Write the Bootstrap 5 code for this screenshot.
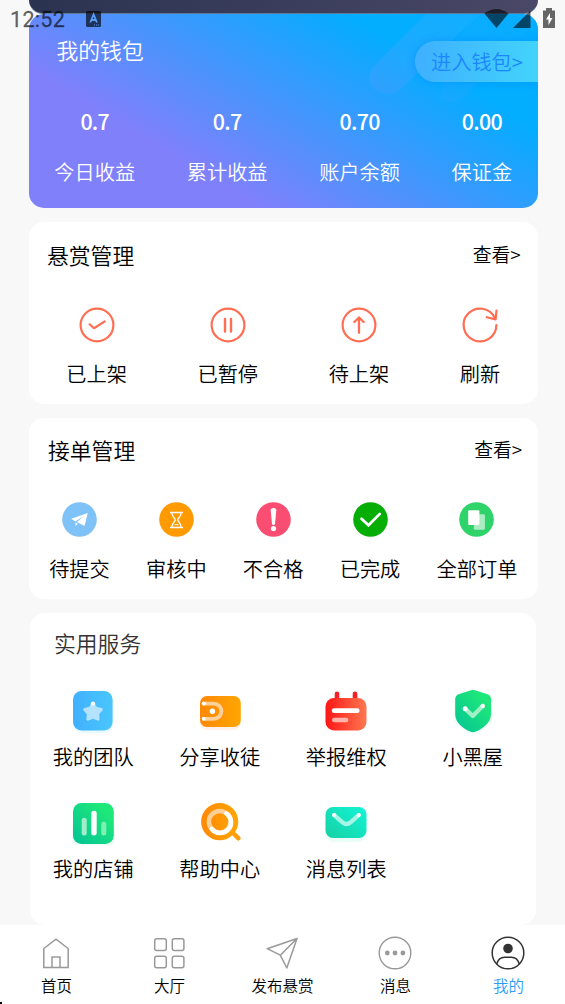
<!DOCTYPE html>
<html lang="zh-CN">
<head>
<meta charset="utf-8">
<meta name="viewport" content="width=device-width, initial-scale=1">
<title>我的</title>
<link href="https://cdn.jsdelivr.net/npm/bootstrap@5.3.0/dist/css/bootstrap.min.css" rel="stylesheet">
<style>
body{background:#f8f8f8;color:#000;font-family:"Noto Sans CJK SC",sans-serif;font-weight:350;font-size:20.2px;line-height:30px;height:1004px;overflow:hidden}
svg{display:block;overflow:visible}
.screen{width:565px;height:1004px}
.content{padding:0 27px 0 28.5px}
.banner{height:14px;background:linear-gradient(90deg,#2a3350,#4a4866);border-radius:0 0 14px 14px;border-bottom:1px solid #5d7a9c}
.wallet{height:194px;border-radius:15px;color:#fff;background:linear-gradient(31deg,#8080fb 28%,#03adff 77%);overflow:hidden}
.stripes{left:0;top:0}
.head{font-size:21.8px;position:relative;top:-1px}
.wallet-title{margin:22px 0 0 28px}
.wallet-top{height:68px}
.wallet-btn{margin-top:27px;width:123px;height:41px;padding-left:16px;line-height:41px;border-radius:21px 0 0 21px;background:linear-gradient(90deg,#3fb0ff,#42d3fb);color:#1c86ff;box-shadow:0 0 8px rgba(0,110,240,.3)}
.sums{margin-top:24px}
.sums b{font-weight:500;font-size:21.4px;letter-spacing:-.7px;margin-bottom:21px}
.panel{background:#fff;border-radius:15px;margin-top:14px}
.panel-head{height:30px}
.more{font-size:18.8px}
.items{padding:0 2.5px}
.p1{height:182px;padding-top:19px}
.p1 .panel-head{padding:0 17.5px 0 18.5px;margin-bottom:36px}
.p1 .items svg{margin-bottom:16px}
.p2{height:181px;padding-top:18px}
.p2 .panel-head{padding:0 16px 0 19.5px;margin-bottom:36px}
.p2 .items svg{margin-bottom:17px}
.more{position:relative;top:-2px}
.p3{height:312px;margin:14px 2px 0 1.5px;padding-top:16px}
.p3 .head{padding-left:24px;color:#333;margin-bottom:29px}
.tool{height:112px}
.tool svg{margin-bottom:8px}
.tabs{height:79px;background:#fff;font-size:15.5px;line-height:22px;padding-top:10px}
.tabs a{color:#000;text-decoration:none}
.tabs svg{margin-bottom:3px;position:relative;left:-.5px}
.tabs .on{color:#2b9df8}
.status{left:0;top:0;width:565px;height:38px}
.clock{left:10px;top:5px;font:400 21.5px/30px Roboto,sans-serif;-webkit-text-stroke:.3px rgba(0,0,0,.5);color:rgba(0,0,0,.6);letter-spacing:.3px}
.speck{left:0;bottom:0;width:2px;height:2px;background:#000}
</style>
</head>
<body>
<svg width="0" height="0" class="position-absolute"><defs>
<linearGradient id="blue"><stop stop-color="#41b0ff"/><stop offset="1" stop-color="#4ac6fb"/></linearGradient>
<linearGradient id="orange"><stop stop-color="#ff8805"/><stop offset="1" stop-color="#ffa602"/></linearGradient>
<linearGradient id="red"><stop stop-color="#ff1616"/><stop offset="1" stop-color="#ff7850"/></linearGradient>
<linearGradient id="green" y1="1" x2="1" y2="0"><stop offset=".1" stop-color="#06c792"/><stop offset=".8" stop-color="#1ee87a"/></linearGradient>
<linearGradient id="teal" y1="1" x2="1" y2="0"><stop stop-color="#16d0a4"/><stop offset="1" stop-color="#13f5d6"/></linearGradient>
<linearGradient id="streak" x1="0" y1="1" x2="1" y2="0"><stop stop-color="#3c9dff" stop-opacity=".85"/><stop offset="1" stop-color="#3cb4ff" stop-opacity=".35"/></linearGradient>
</defs></svg>
<div class="screen position-relative d-flex flex-column">
<main class="content flex-grow-1">
  <div class="banner"></div>
  <section class="wallet position-relative">
    <svg class="stripes position-absolute" width="510" height="194">
      <path d="M401 -4L345 52Q336 64 343 73Q359 86 373 74L451 0V-4Z" fill="url(#streak)" opacity=".65"/>
      <path d="M454 -4L420 32L412 85Q422 92 435 83L514 0V-4Z" fill="url(#streak)" opacity=".22"/>
    </svg>
    <div class="wallet-top position-relative d-flex justify-content-between align-items-start">
      <div class="head wallet-title">我的钱包</div><a class="wallet-btn text-decoration-none">进入钱包&gt;</a>
    </div>
    <div class="sums position-relative d-flex justify-content-around text-center">
      <div><b class="d-block">0.7</b>今日收益</div><div><b class="d-block">0.7</b>累计收益</div>
      <div><b class="d-block">0.70</b>账户余额</div><div><b class="d-block">0.00</b>保证金</div>
    </div>
  </section>

  <section class="panel p1">
    <div class="panel-head d-flex justify-content-between"><div class="head">悬赏管理</div><div class="more">查看&gt;</div></div>
    <div class="items d-flex justify-content-around text-center">
      <div><svg class="mx-auto" width="36" height="36" viewBox="-18 -18 36 36" fill="none" stroke="#ff6d52" stroke-width="2.2" stroke-linecap="round" stroke-linejoin="round"><circle r="16.4"/><path d="M-7.4-.7L-3 3.2 7.8-3.6"/></svg>已上架</div>
      <div><svg class="mx-auto" width="36" height="36" viewBox="-18 -18 36 36" fill="none" stroke="#ff6d52" stroke-width="2.2" stroke-linecap="round"><circle r="16.4"/><path d="M-3-6V6.500M3-6V6.500" stroke-width="2.400"/></svg>已暂停</div>
      <div><svg class="mx-auto" width="36" height="36" viewBox="-18 -18 36 36" fill="none" stroke="#ff6d52" stroke-width="2.2" stroke-linecap="round" stroke-linejoin="round"><circle r="16.4"/><path d="M0-7.5V7.8M-4.7-3L0-7.5 4.7-3" stroke-width="2.3"/></svg>待上架</div>
      <div><svg class="mx-auto" width="36" height="36" viewBox="-18 -18 36 36" fill="none" stroke="#ff6d52" stroke-width="2.2" stroke-linecap="round" stroke-linejoin="round"><path d="M16.4 0A16.4 16.4 0 1 1 14.8-7.1M16.5-14.5L15.6-5.6 6.7-7.8"/></svg>刷新</div>
    </div>
  </section>

  <section class="panel p2">
    <div class="panel-head d-flex justify-content-between"><div class="head">接单管理</div><div class="more">查看&gt;</div></div>
    <div class="items d-flex justify-content-around text-center">
      <div><svg class="mx-auto" width="35" height="35" viewBox="-17.5 -17.5 35 35"><circle r="17.3" fill="#7fc2f7"/><path d="M8.3-6.6L-8.3-.8-4.2 2 4-3.3-2.6 2.6 5 6.6ZM-4 3V6.5L-1.6 4.2Z" fill="#fff"/></svg>待提交</div>
      <div><svg class="mx-auto" width="35" height="35" viewBox="-17.5 -17.5 35 35"><circle r="17.3" fill="#ff9a00"/><g fill="none" stroke="#fff" stroke-width="1.3"><path d="M-6.5-7H6.5M-6.5 8H6.5M-4.7-7C-4.7-3-1.5-1.5-1.2.4-1.5 2.4-4.7 3.5-4.7 8M4.7-7C4.7-3 1.5-1.5 1.2.4 1.5 2.4 4.7 3.5 4.7 8"/><path d="M-2 5.2H2" stroke-width="1"/></g></svg>审核中</div>
      <div><svg class="mx-auto" width="35" height="35" viewBox="-17.5 -17.5 35 35"><circle r="17.3" fill="#f94e72"/><path d="M-2.8-9.3Q-2.8-11.5 0-11.5T2.8-9.3L1.5 4.8Q0 6-1.5 4.8Z" fill="#fff"/><circle cy="9" r="2.6" fill="#fff"/></svg>不合格</div>
      <div><svg class="mx-auto" width="35" height="35" viewBox="-17.5 -17.5 35 35"><circle r="17.3" fill="#05ae05"/><path d="M-9-.8L-2 5.8 9.3-5.6" fill="none" stroke="#fff" stroke-width="2.7" stroke-linecap="round"/></svg>已完成</div>
      <div><svg class="mx-auto" width="35" height="35" viewBox="-17.5 -17.5 35 35"><circle r="17.3" fill="#2ed36a"/><rect x="-2.6" y="-5.3" width="11" height="15.5" rx="1" fill="#abedc3"/><rect x="-8.3" y="-9.3" width="11.2" height="14.7" rx="1" fill="#fff"/></svg>全部订单</div>
    </div>
  </section>

  <section class="panel p3">
    <div class="head">实用服务</div>
    <div class="row g-0 text-center">
      <div class="col-3 tool"><svg class="mx-auto" width="46" height="46" viewBox="-23 -23 46 46"><rect x="-20" y="-18" width="40" height="40" rx="9" fill="#e8f9ff"/><rect x="-20" y="-20" width="39.6" height="39.4" rx="8.5" fill="url(#blue)"/><path d="M0-7.5L2.8-2.7 8.3-1.5 4.6 2.7 5.1 8.2 0 6-5.1 8.2-4.6 2.7-8.3-1.5-2.8-2.7Z" fill="#b5e2ff" stroke="#b5e2ff" stroke-width="3" stroke-linejoin="round"/><circle cy="-7.4" r="2.1" fill="#fff"/></svg>我的团队</div>
      <div class="col-3 tool"><svg class="mx-auto" width="46" height="46" viewBox="-23 -23 46 46"><rect x="-20" y="-12" width="40.6" height="31" rx="7" fill="#fff1ec"/><rect x="-20" y="-15" width="40.8" height="31" rx="7" fill="url(#orange)"/><path d="M-16.4-7.4H-6.2A7.6 7.6 0 0 1-6.2 7.8H-16.4" fill="none" stroke="#ffd09a" stroke-width="3.8" stroke-linecap="round"/><g fill="#fff"><circle cx="-16.2" cy="-7.4" r="2"/><circle cx="-16.2" cy="7.8" r="2"/><circle cx="-7.6" cy=".2" r="2.7"/></g></svg>分享收徒</div>
      <div class="col-3 tool"><svg class="mx-auto" width="46" height="46" viewBox="-23 -23 46 46"><path d="M-9-17.3V-10M9-17.3V-10" stroke="#f42027" stroke-width="4.6" stroke-linecap="round"/><rect x="-20.5" y="-13" width="41" height="32.5" rx="8.5" fill="url(#red)"/><rect x="-14.2" y="-2.7" width="27.8" height="4.8" rx="2.4" fill="#fff"/><rect x="-14" y="6.7" width="16.4" height="4.6" rx="2.3" fill="#ffb4ab"/></svg>举报维权</div>
      <div class="col-3 tool"><svg class="mx-auto" width="46" height="46" viewBox="-23 -23 46 46"><path d="M-18-10H18V10L5 21H-5L-18 10Z" fill="#eefbf4" stroke="#f3fdf7" stroke-width="3"/><path d="M-2-20.8Q0-21.8 2-20.8L14.5-16.7Q18-15.3 18-11.8V3.5C18 12 9 18 3 20.5Q0 22 -3 20.5C-9 18-17.8 12-17.8 3.5V-11.8Q-17.8-15.3-14.5-16.7Z" fill="url(#green)"/><path d="M-7.8-2.3L-.2 5 9.7-5" fill="none" stroke="#a0f0c6" stroke-width="4.2" stroke-linecap="round" stroke-linejoin="round"/><circle cx="-7.8" cy="-2.3" r="2.5" fill="#fff"/><circle cx="9.7" cy="-5" r="2.2" fill="#fff"/></svg>小黑屋</div>
      <div class="col-3 tool"><svg class="mx-auto" width="46" height="46" viewBox="-23 -23 46 46"><rect x="-21" y="0" width="42.5" height="22" rx="3" fill="#effcf5"/><rect x="-20" y="-20" width="40.8" height="41" rx="8.5" fill="url(#green)"/><rect x="-11.3" y="-5.3" width="5" height="17.8" rx="2.5" fill="#a1edcb"/><rect x="-1.7" y="-12.3" width="5.4" height="24.8" rx="2.7" fill="#fff"/><rect x="8.3" y="-1.3" width="5" height="13.8" rx="2.5" fill="#7df1b1"/></svg>我的店铺</div>
      <div class="col-3 tool"><svg class="mx-auto" width="46" height="46" viewBox="-23 -23 46 46"><path d="M12 9L18.5 15.3" stroke="#ff9c08" stroke-width="4.4" stroke-linecap="round"/><circle cx="-.3" cy="-1.3" r="18.6" fill="url(#orange)"/><g fill="none" stroke-width="4.5"><circle cx="-.3" cy="-1.3" r="10.8" stroke="#ffcf98"/><path d="M6.4-9.6A10.8 10.8 0 1 1-8.2 6" stroke="#fff" stroke-linecap="round"/></g></svg>帮助中心</div>
      <div class="col-3 tool"><svg class="mx-auto" width="46" height="46" viewBox="-23 -23 46 46"><rect x="-20.5" y="-10" width="41" height="29" rx="8" fill="#eafcf8"/><rect x="-20.5" y="-16" width="41" height="31" rx="7.5" fill="url(#teal)"/><path d="M-11.8-7.9L-3.5-.7Q.5 2.8 4.5-.7L12.6-7.9" fill="none" stroke="#a4f5e5" stroke-width="4.2" stroke-linecap="round"/><circle cx="-11.9" cy="-8" r="2.1" fill="#fff"/><circle cx="12.7" cy="-8" r="2.1" fill="#fff"/></svg>消息列表</div>
    </div>
  </section>
</main>

<nav class="tabs d-flex text-center">
  <a class="col"><svg class="mx-auto" width="36" height="36" viewBox="-18 -18 36 36" fill="none" stroke="#999" stroke-width="1.5"><path d="M-12.2 14.5V-4.5L0-13.8 12.2-4.5V14.5ZM-4 14.5V4H4V14.5"/></svg>首页</a>
  <a class="col"><svg class="mx-auto" width="36" height="36" viewBox="-18 -18 36 36" fill="none" stroke="#999" stroke-width="1.5"><rect x="-14.3" y="-14.2" width="11.6" height="11.6" rx="2"/><rect x="3.3" y="-14.2" width="11.6" height="11.6" rx="2"/><rect x="-14.3" y="3.2" width="11.6" height="11.6" rx="2"/><rect x="3.3" y="3.2" width="11.6" height="11.6" rx="2"/></svg>大厅</a>
  <a class="col"><svg class="mx-auto" width="36" height="36" viewBox="-18 -18 36 36" fill="none" stroke="#999" stroke-width="1.5" stroke-linejoin="round"><path d="M15-14.5L-14.8-4.3-1.7 2.2 4.8 15ZM15-14.5L-1.7 2.2"/></svg>发布悬赏</a>
  <a class="col"><svg class="mx-auto" width="36" height="36" viewBox="-18 -18 36 36"><circle r="15.8" fill="none" stroke="#999" stroke-width="1.4"/><g fill="#999"><circle cx="-7.7" r="2.4"/><circle r="2.4"/><circle cx="7.9" r="2.4"/></g></svg>消息</a>
  <a class="col on"><svg class="mx-auto" width="36" height="36" viewBox="-18 -18 36 36" fill="none" stroke="#333" stroke-width="1.5"><circle r="15.8"/><circle cy="-4.5" r="4.8" fill="#333" stroke="none"/><path d="M-11.2 11C-10 6.5-7 4.2-3.5 4.2H3.5C7 4.2 10 6.5 11.2 11"/></svg>我的</a>
</nav>
<div class="status position-absolute">
  <div class="clock position-absolute">12:52</div>
  <svg width="565" height="38"><rect x="86" y="11" width="15" height="16" rx="1.5" fill="#000" fill-opacity=".65"/><path d="M90.3 22.5L93.6 14.3 96.9 22.5M91.5 20H95.7" fill="none" stroke="#5c9cf5" stroke-width="1.8"/><path d="M94 25H100" stroke="#5c9cf5" stroke-width="1" stroke-dasharray="1 1"/>
  <path d="M484.3 13.5Q496.5 4.5 508.5 13.5L496.5 28Z" fill="#000" fill-opacity=".6"/><path d="M513 28L530.5 10.5V28Z" fill="#000" fill-opacity=".6"/><path d="M543 10.5H546V8H552V10.5H555V28H543Z" fill="#666"/><path d="M550 13L546 19.5H548.5V25L552.5 18H550Z" fill="#fff"/></svg>
</div>
<div class="speck position-absolute"></div>
</div>
<script src="https://cdn.jsdelivr.net/npm/bootstrap@5.3.0/dist/js/bootstrap.bundle.min.js"></script>
</body>
</html>
